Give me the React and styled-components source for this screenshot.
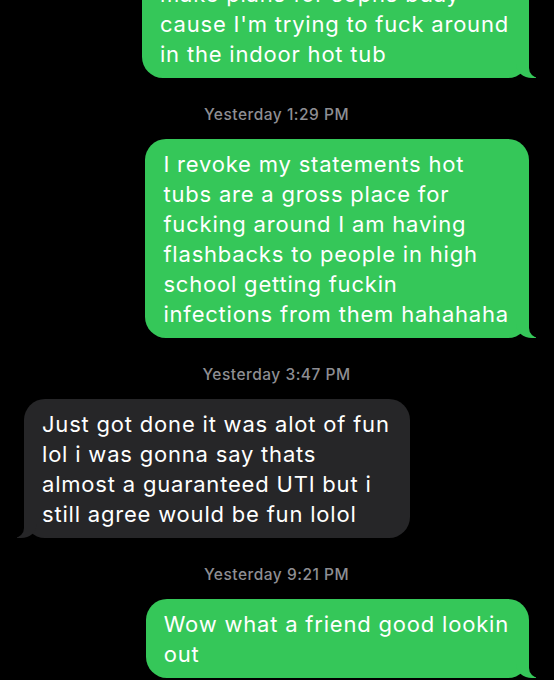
import React from "react";
import styled, { createGlobalStyle, css } from "styled-components";

const Global = createGlobalStyle`
  html, body { margin: 0; padding: 0; background: #000; }
  body { font-family: Inter, "Noto Sans", "Liberation Sans", sans-serif; }
`;

const Screen = styled.div`
  width: 554px;
  height: 680px;
  overflow: hidden;
  background: #000;
`;

const Thread = styled.div`
  display: flex;
  flex-direction: column;
  margin-top: -31px;
  padding: 0 25px 0 24px;
`;

const Stamp = styled.div`
  margin: 28px 0 15px;
  text-align: center;
  font-size: 15.5px;
  letter-spacing: 0.5px;
  line-height: 18px;
  font-weight: 500;
  color: #8e8e93;
`;

const Bubble = styled.div`
  position: relative;
  padding: 10px 20px 9px 18px;
  border-radius: 21px;
  font-size: 22px;
  letter-spacing: 0.8px;
  line-height: 30px;
  color: #fff;
  white-space: nowrap;

  &::before,
  &::after {
    content: "";
    position: absolute;
    bottom: 0;
    height: 25px;
  }

  ${({ $sent }) =>
    $sent
      ? css`
          align-self: flex-end;
          background: #35c759;
          &::before {
            right: -7px;
            width: 20px;
            background: #35c759;
            border-bottom-left-radius: 16px 14px;
          }
          &::after {
            right: -26px;
            width: 26px;
            background: #000;
            border-bottom-left-radius: 10px;
          }
        `
      : css`
          align-self: flex-start;
          background: #262628;
          &::before {
            left: -7px;
            width: 20px;
            background: #262628;
            border-bottom-right-radius: 16px 14px;
          }
          &::after {
            left: -26px;
            width: 26px;
            background: #000;
            border-bottom-right-radius: 10px;
          }
        `}
`;

const Line = styled.span`
  display: block;
`;

const messages = [
  {
    sent: true,
    lines: [
      "make plans for sophs bday",
      "cause I'm trying to fuck around",
      "in the indoor hot tub",
    ],
  },
  { stamp: "Yesterday 1:29 PM" },
  {
    sent: true,
    lines: [
      "I revoke my statements hot",
      "tubs are a gross place for",
      "fucking around I am having",
      "flashbacks to people in high",
      "school getting fuckin",
      "infections from them hahahaha",
    ],
  },
  { stamp: "Yesterday 3:47 PM" },
  {
    sent: false,
    lines: [
      "Just got done it was alot of fun",
      "lol i was gonna say thats",
      "almost a guaranteed UTI but i",
      "still agree would be fun lolol",
    ],
  },
  { stamp: "Yesterday 9:21 PM" },
  {
    sent: true,
    lines: ["Wow what a friend good lookin", "out"],
  },
];

export default function App() {
  return (
    <Screen>
      <Global />
      <Thread>
        {messages.map((m, i) =>
          m.stamp ? (
            <Stamp key={i}>{m.stamp}</Stamp>
          ) : (
            <Bubble key={i} $sent={m.sent}>
              {m.lines.map((l, j) => (
                <Line key={j}>{l}</Line>
              ))}
            </Bubble>
          )
        )}
      </Thread>
    </Screen>
  );
}
